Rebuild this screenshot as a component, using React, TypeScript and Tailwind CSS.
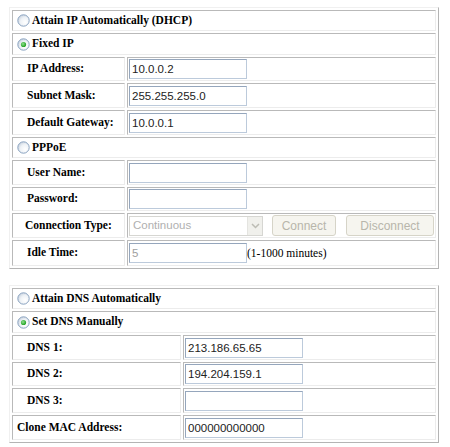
import React from "react";

const cellBorder =
  "border border-solid border-t-[#b9b9b9] border-l-[#b9b9b9] border-r-[#ececec] border-b-[#ececec] bg-white";
const tableBorder =
  "border border-solid border-t-[#f0f0f0] border-l-[#f0f0f0] border-r-[#b4b4b4] border-b-[#b4b4b4] bg-white p-[2px] flex flex-col gap-[2px] w-[430px] ml-[9px]";
const serifBold =
  "font-['Liberation_Serif','Times_New_Roman',serif] font-bold text-[11.5px] text-black leading-none whitespace-nowrap";
const inputCls =
  "w-[118px] h-[20px] border border-solid border-t-[#95a6bc] border-l-[#95a6bc] border-r-[#bccadb] border-b-[#bccadb] bg-white px-[2px] text-[11.5px] font-['Liberation_Sans',Arial,sans-serif] text-[#222] outline-none";

function Radio({ checked }: { checked?: boolean }) {
  return (
    <svg width="13" height="13" viewBox="0 0 13 13" className="shrink-0">
      <defs>
        <radialGradient id="rbg" cx="0.65" cy="0.65" r="0.7">
          <stop offset="0" stopColor="#ffffff" />
          <stop offset="0.6" stopColor="#eef2f6" />
          <stop offset="1" stopColor="#c9d3df" />
        </radialGradient>
        <radialGradient id="rdot" cx="0.4" cy="0.4" r="0.6">
          <stop offset="0" stopColor="#8ee08e" />
          <stop offset="1" stopColor="#21a121" />
        </radialGradient>
      </defs>
      <circle cx="6.5" cy="6.5" r="5.7" fill="url(#rbg)" stroke="#8aa3c0" strokeWidth="1" />
      {checked && <circle cx="6.5" cy="6.5" r="2.6" fill="url(#rdot)" />}
    </svg>
  );
}

function RadioRow({ label, checked, h }: { label: string; checked?: boolean; h: string }) {
  return (
    <div className={`${cellBorder} ${h} flex items-center pl-[4px] gap-[2px]`}>
      <Radio checked={checked} />
      <span className={serifBold}>{label}</span>
    </div>
  );
}

function FieldRow({
  label,
  labelW,
  pl,
  h,
  children,
}: {
  label: string;
  labelW: string;
  pl: string;
  h: string;
  children: React.ReactNode;
}) {
  return (
    <div className={`flex gap-[2px] ${h}`}>
      <div className={`${cellBorder} ${labelW} ${pl} shrink-0 flex items-center`}>
        <span className={serifBold}>{label}</span>
      </div>
      <div className={`${cellBorder} flex-1 flex items-center pl-[1px]`}>{children}</div>
    </div>
  );
}

function TextInput({ value, disabled }: { value: string; disabled?: boolean }) {
  return (
    <input
      readOnly
      disabled={disabled}
      defaultValue={value}
      className={`${inputCls} ${disabled ? "text-[#a0a0a0]" : ""}`}
    />
  );
}

function DisabledSelect() {
  return (
    <div className="w-[134px] h-[20px] border border-solid border-[#d6d6d2] bg-white flex items-center">
      <span className="flex-1 pl-[3px] text-[11.5px] font-['Liberation_Sans',Arial,sans-serif] text-[#b0b0b0]">
        Continuous
      </span>
      <div className="w-[15px] h-[18px] bg-[#f0f0ec] border-l border-[#e4e4e0] flex items-center justify-center">
        <svg width="9" height="6" viewBox="0 0 9 6">
          <path d="M1 1 L4.5 4.5 L8 1" fill="none" stroke="#bcbcb4" strokeWidth="1.5" />
        </svg>
      </div>
    </div>
  );
}

function DisabledButton({ label, w }: { label: string; w: string }) {
  return (
    <div
      className={`${w} h-[21px] rounded-[3px] border border-solid border-[#d6d4c8] bg-[#f6f5ef] flex items-center justify-center text-[12px] font-['Liberation_Sans',Arial,sans-serif] text-[#b8b6ab]`}
    >
      {label}
    </div>
  );
}

export default function App() {
  const w1 = "w-[113px]";
  const w2 = "w-[169px]";
  return (
    <div className="w-[450px] h-[447px] bg-white overflow-hidden">
      <div className={`${tableBorder} mt-[7px]`}>
        <RadioRow label="Attain IP Automatically (DHCP)" h="h-[21px]" />
        <RadioRow label="Fixed IP" checked h="h-[22px]" />
        <FieldRow label="IP Address:" labelW={w1} pl="pl-[14px]" h="h-[24px]">
          <TextInput value="10.0.0.2" />
        </FieldRow>
        <FieldRow label="Subnet Mask:" labelW={w1} pl="pl-[14px]" h="h-[25px]">
          <TextInput value="255.255.255.0" />
        </FieldRow>
        <FieldRow label="Default Gateway:" labelW={w1} pl="pl-[14px]" h="h-[25px]">
          <TextInput value="10.0.0.1" />
        </FieldRow>
        <RadioRow label="PPPoE" h="h-[21px]" />
        <FieldRow label="User Name:" labelW={w1} pl="pl-[14px]" h="h-[25px]">
          <TextInput value="" />
        </FieldRow>
        <FieldRow label="Password:" labelW={w1} pl="pl-[14px]" h="h-[24px]">
          <TextInput value="" />
        </FieldRow>
        <FieldRow label="Connection Type:" labelW={w1} pl="pl-[12px]" h="h-[25px]">
          <DisabledSelect />
          <div className="ml-[9px]">
            <DisabledButton label="Connect" w="w-[64px]" />
          </div>
          <div className="ml-[10px]">
            <DisabledButton label="Disconnect" w="w-[88px]" />
          </div>
        </FieldRow>
        <FieldRow label="Idle Time:" labelW={w1} pl="pl-[14px]" h="h-[26px]">
          <TextInput value="5" disabled />
          <span className="self-end mb-[3px] text-[11.5px] font-['Liberation_Serif','Times_New_Roman',serif] text-black whitespace-nowrap">
            (1-1000 minutes)
          </span>
        </FieldRow>
      </div>

      <div className={`${tableBorder} mt-[16px]`}>
        <RadioRow label="Attain DNS Automatically" h="h-[21px]" />
        <RadioRow label="Set DNS Manually" checked h="h-[22px]" />
        <FieldRow label="DNS 1:" labelW={w2} pl="pl-[14px]" h="h-[25px]">
          <TextInput value="213.186.65.65" />
        </FieldRow>
        <FieldRow label="DNS 2:" labelW={w2} pl="pl-[14px]" h="h-[24px]">
          <TextInput value="194.204.159.1" />
        </FieldRow>
        <FieldRow label="DNS 3:" labelW={w2} pl="pl-[14px]" h="h-[25px]">
          <TextInput value="" />
        </FieldRow>
        <FieldRow label="Clone MAC Address:" labelW={w2} pl="pl-[4px]" h="h-[25px]">
          <TextInput value="000000000000" />
        </FieldRow>
      </div>
    </div>
  );
}
